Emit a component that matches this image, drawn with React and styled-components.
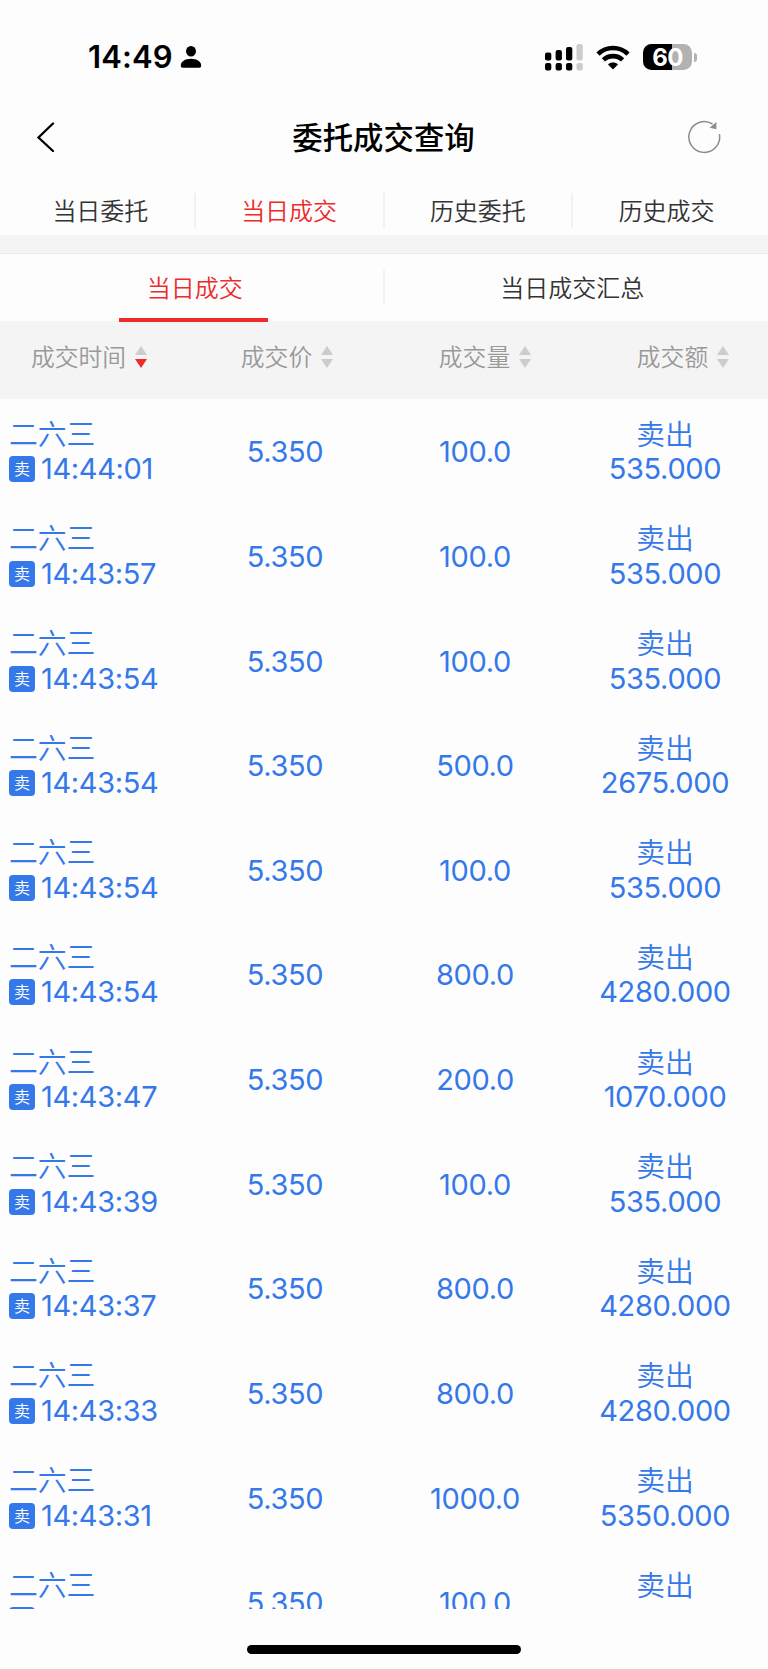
import React from 'react'
import styled, { createGlobalStyle, css } from 'styled-components'

const cjk = '"Noto Sans CJK SC", sans-serif';
const latin = 'Inter, "Noto Sans CJK SC", sans-serif';

const GlobalStyle = createGlobalStyle`
  * {
    box-sizing: border-box;
  }

  body {
    margin: 0;
    background: #fdfdfd;
    font-family: ${cjk};
    font-weight: 350;
  }
`;

const Screen = styled.div`
  display: flex;
  flex-direction: column;
  width: 768px;
  height: 1669px;
  overflow: hidden;
  background: #fdfdfd;
`;

const StatusBar = styled.header`
  display: flex;
  justify-content: space-between;
  align-items: center;
  height: 99px;
  padding: 15px 71px 0 88px;
`;

const Clock = styled.div`
  display: flex;
  align-items: center;
  gap: 5px;

  > span {
    width: 87px;
    font: 600 31px/36px ${latin};
    letter-spacing: 0.1px;
    color: #000;
    white-space: nowrap;
  }
`;

const Indicators = styled.div`
  display: flex;
  align-items: center;
`;

const Battery = styled.div`
  display: flex;
  align-items: center;
  gap: 2px;
  margin-left: 13px;
`;

const BatteryBody = styled.div`
  display: flex;
  justify-content: center;
  width: 49px;
  height: 26px;
  border-radius: 8.5px;
  background: linear-gradient(90deg, #000 60%, #b2b2b2 60%);
  color: #fff;
  font: 700 24px/27px ${latin};
  letter-spacing: -0.6px;
`;

const BatteryTip = styled.div`
  width: 3px;
  height: 9px;
  border-radius: 0 4px 4px 0;
  background: #b2b2b2;
`;

const NavBar = styled.nav`
  display: grid;
  grid-template-columns: 100px 1fr 100px;
  align-items: center;
  height: 76px;
  padding: 0 47px 0 36px;
`;

const Title = styled.h1`
  margin: 0 0 2px 10px;
  font-size: 30.4px;
  font-weight: 500;
  line-height: 40px;
  text-align: center;
  color: #000;
`;

const Tabs = styled.div`
  display: flex;
  align-items: center;
  padding: ${({ $top }) => $top}px 8px 0 7px;
  height: ${({ $height }) => $height}px;
`;

const Tab = styled.div`
  flex: 1;
  height: 35px;
  padding-bottom: 1px;
  font-size: 24px;
  line-height: 34px;
  text-align: center;
  color: ${({ $active }) => ($active ? '#ee2a2b' : '#333')};

  & + & {
    border-left: 2px solid #f1f1f1;
  }
`;

const Band = styled.div`
  height: 19px;
  background: #f4f4f4;
  border-bottom: 1px solid #ededed;
`;

const SubTabs = styled(Tabs)`
  position: relative;
`;

const ActiveLine = styled.div`
  position: absolute;
  left: 119px;
  bottom: -1px;
  width: 149px;
  height: 4px;
  background: #ee2a2b;
`;

const TableHead = styled.div`
  display: grid;
  grid-template-columns: 178px 218px 178px 218px;
  width: 792px;
  height: 78px;
  padding-bottom: 6px;
  background: #f4f4f4;
`;

const HeadCell = styled.div`
  display: flex;
  justify-content: center;
  align-items: center;
  gap: 9px;
  color: #999;
  font-size: 23.8px;
  line-height: 34px;

  > span {
    margin-top: -2px;
  }
`;

const List = styled.main`
  height: 1210px;
  overflow: hidden;
`;

const Row = styled.div`
  display: grid;
  grid-template-columns: 190px 190px 190px 190px;
  height: 104.64px;
  color: #3578ea;
  font-size: 29px;
`;

const Cell = styled.div`
  display: flex;
  flex-direction: column;
  justify-content: center;
  align-items: center;

  ${({ $first }) => $first && css`
    align-items: flex-start;
    padding-left: 9px;
  `}
`;

const Name = styled.div`
  font-size: 28.8px;
  line-height: 36px;
`;

const Figure = styled.div`
  font: 370 29px/36px ${latin};
  letter-spacing: -0.35px;
  white-space: nowrap;
`;

const Single = styled(Figure)`
  margin-top: 2px;
`;

const TimeLine = styled.div`
  display: flex;
  align-items: center;
  gap: 6px;
  height: 37px;
`;

const SellBadge = styled.span`
  width: 26px;
  height: 26px;
  border-radius: 4px;
  background: #3578ea;
  color: #fff;
  font-size: 16px;
  line-height: 25px;
  text-align: center;
`;

const HomeArea = styled.footer`
  display: flex;
  justify-content: center;
  flex: 1;
  padding-top: 36px;
`;

const HomeIndicator = styled.div`
  width: 274px;
  height: 9px;
  border-radius: 5px;
  background: #000;
`;

const mainTabs = ['当日委托', '当日成交', '历史委托', '历史成交'];

const columns = ['成交时间', '成交价', '成交量', '成交额'];

const trades = [
  ['14:44:01', '100.0', '535.000'],
  ['14:43:57', '100.0', '535.000'],
  ['14:43:54', '100.0', '535.000'],
  ['14:43:54', '500.0', '2675.000'],
  ['14:43:54', '100.0', '535.000'],
  ['14:43:54', '800.0', '4280.000'],
  ['14:43:47', '200.0', '1070.000'],
  ['14:43:39', '100.0', '535.000'],
  ['14:43:37', '800.0', '4280.000'],
  ['14:43:33', '800.0', '4280.000'],
  ['14:43:31', '1000.0', '5350.000'],
  ['', '100.0', ''],
];

function PersonIcon() {
  return (
    <svg width="22" height="22" viewBox="0 0 22 22">
      <ellipse cx="11" cy="5.3" rx="5" ry="5.3" />
      <path d="M0.8 19.5C0.8 15.5 5 12.7 11 12.7s10.2 2.8 10.2 6.8c0 1.8-.7 2.2-2 2.2H2.8c-1.3 0-2-.4-2-2.2Z" />
    </svg>
  )
}

function SignalIcon() {
  return (
    <svg width="38" height="27" viewBox="0 0 38 27">
      <rect x="0" y="8.5" width="6.3" height="8" rx="2" />
      <rect x="10.6" y="6" width="6.3" height="10.5" rx="2" />
      <rect x="21" y="3" width="6.3" height="13.5" rx="2" />
      <rect x="31.5" y="0" width="6.3" height="16.5" rx="2" fill="#ccc" />
      <rect x="0" y="19" width="6.3" height="7.5" rx="2" />
      <rect x="10.6" y="19" width="6.3" height="7.5" rx="2" />
      <rect x="21" y="19" width="6.3" height="7.5" rx="2" />
      <rect x="31.5" y="19" width="6.3" height="7.5" rx="2" fill="#ccc" />
    </svg>
  )
}

const WifiSvg = styled.svg`
  margin-left: 13px;
`;

function WifiIcon() {
  return (
    <WifiSvg width="34" height="25" viewBox="0 0 34 25">
      <g fill="none" stroke="#000" strokeWidth="4.6">
        <path d="M2 9.2C10.3 1 23.7 1 32 9.2" />
        <path d="M7.4 14.9c5.3-5.1 13.9-5.1 19.2 0" />
      </g>
      <path d="M17 24.4l-5-5c2.8-2.6 7.2-2.6 10 0Z" />
    </WifiSvg>
  )
}

function BackIcon() {
  return (
    <svg width="20" height="30" viewBox="0 0 20 30">
      <path d="M17 1.5L2.5 15.5L17 29" fill="none" stroke="#000" strokeWidth="2.3" strokeLinecap="round" />
    </svg>
  )
}

const RefreshSvg = styled.svg`
  justify-self: end;
`;

function RefreshIcon() {
  return (
    <RefreshSvg width="34" height="34" viewBox="0 0 34 34">
      <path d="M32.4 14.2A15.4 15.4 0 1 1 25.5 4" fill="none" stroke="#8c8c8c" strokeWidth="1.5" />
      <path d="M29.4 2V9.2L22.6 7.8Z" fill="#8c8c8c" />
    </RefreshSvg>
  )
}

function SortIcon({ down }) {
  return (
    <svg width="12" height="22" viewBox="0 0 12 22">
      <path d="M6 0L12 9H0Z" fill="#ccc" />
      <path d="M0 13H12L6 22Z" fill={down ? '#ee2a2b' : '#ccc'} />
    </svg>
  )
}

function TradeRow({ time, volume, amount }) {
  return (
    <Row>
      <Cell $first>
        <Name>二六三</Name>
        <TimeLine>
          <SellBadge>卖</SellBadge>
          <Figure>{time}</Figure>
        </TimeLine>
      </Cell>
      <Cell><Single>5.350</Single></Cell>
      <Cell><Single>{volume}</Single></Cell>
      <Cell>
        <Name>卖出</Name>
        <TimeLine><Figure>{amount}</Figure></TimeLine>
      </Cell>
    </Row>
  )
}

function App() {
  return (
    <Screen>
      <GlobalStyle />
      <StatusBar>
        <Clock>
          <span>14:49</span>
          <PersonIcon />
        </Clock>
        <Indicators>
          <SignalIcon />
          <WifiIcon />
          <Battery>
            <BatteryBody>60</BatteryBody>
            <BatteryTip />
          </Battery>
        </Indicators>
      </StatusBar>
      <NavBar>
        <BackIcon />
        <Title>委托成交查询</Title>
        <RefreshIcon />
      </NavBar>
      <Tabs $height={60} $top={11}>
        {mainTabs.map((label, i) => (
          <Tab key={label} $active={i === 1}>{label}</Tab>
        ))}
      </Tabs>
      <Band />
      <SubTabs $height={67} $top={0}>
        <Tab $active>当日成交</Tab>
        <Tab>当日成交汇总</Tab>
        <ActiveLine />
      </SubTabs>
      <TableHead>
        {columns.map((label, i) => (
          <HeadCell key={label}>
            <span>{label}</span>
            <SortIcon down={i === 0} />
          </HeadCell>
        ))}
      </TableHead>
      <List>
        {trades.map(([time, volume, amount], i) => (
          <TradeRow key={i} time={time} volume={volume} amount={amount} />
        ))}
      </List>
      <HomeArea>
        <HomeIndicator />
      </HomeArea>
    </Screen>
  )
}

export default App
